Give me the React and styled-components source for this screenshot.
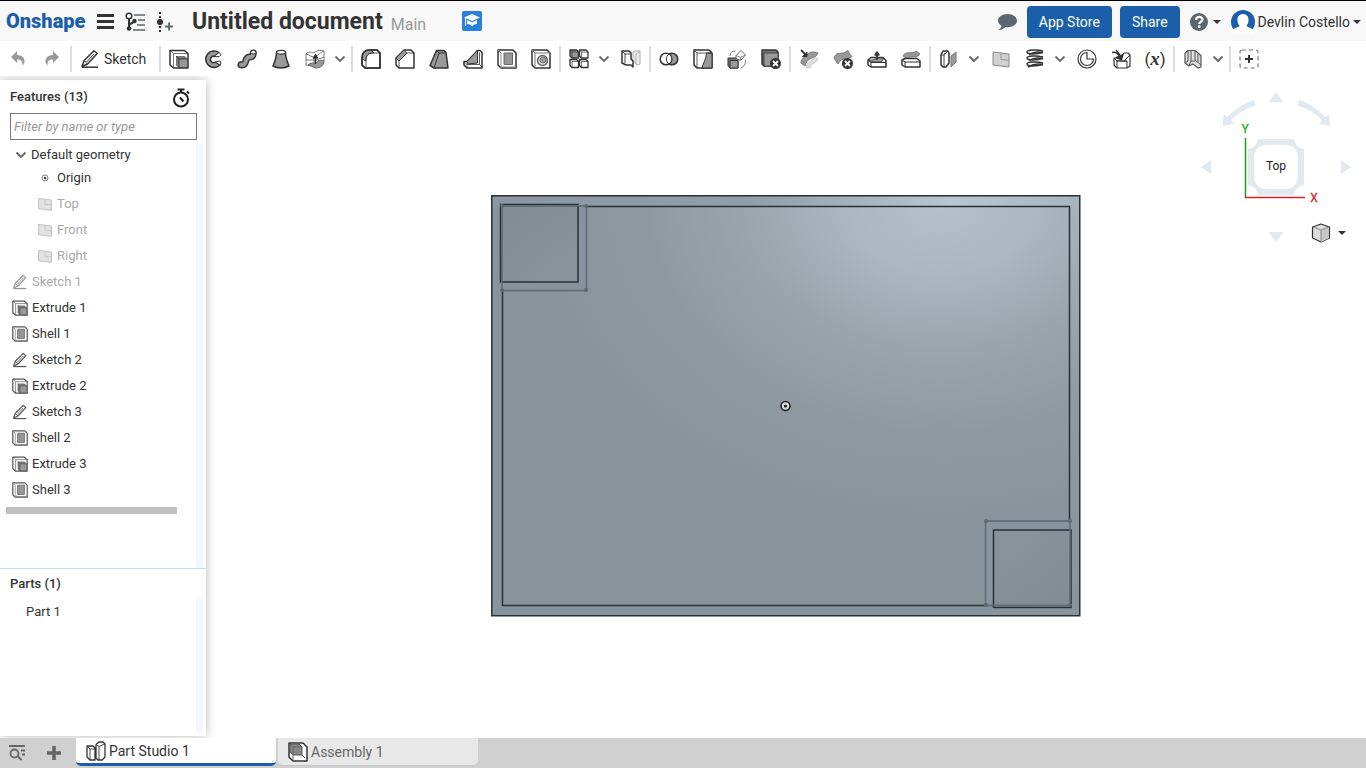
import React from "react";
import styled, { createGlobalStyle, css } from "styled-components";

const GlobalStyle = createGlobalStyle`
  *, *::before, *::after { box-sizing: border-box; }
  body {
    margin: 0;
    background: #fff;
    color: #333;
    font: 14px/20px Roboto, "Liberation Sans", sans-serif;
  }
  button, input { font: inherit; color: inherit; }
  h1, h2, ul, p { margin: 0; padding: 0; font: inherit; }
  ul { list-style: none; }
  svg { display: block; flex: none; }
`;

/* ---------- layout ---------- */

const Page = styled.div`
  display: flex;
  flex-direction: column;
  height: 100vh;
  overflow: hidden;
`;

const Header = styled.header`
  display: flex;
  align-items: center;
  height: 41px;
  padding: 2px 5px 0 6px;
  border-top: 1px solid #000;
  background: #f8f8f8;
  flex: none;
`;

const Toolbar = styled.div`
  display: flex;
  align-items: center;
  height: 39px;
  padding: 0 0 4px 1px;
  flex: none;
`;

const Workspace = styled.div`
  display: flex;
  flex: 1;
  min-height: 0;
`;

const Sidebar = styled.aside`
  position: relative;
  display: flex;
  flex-direction: column;
  width: 206px;
  margin-bottom: 2px;
  background: #fff;
  font-size: 13px;
  box-shadow: 0 0 10px rgba(0, 0, 0, 0.28);
  clip-path: inset(-4px -14px -2px 0);
  flex: none;
`;

const Viewport = styled.main`
  position: relative;
  display: flex;
  flex: 1;
  align-items: center;
  justify-content: center;
  padding-bottom: 7px;
  min-width: 0;
`;

const Footer = styled.footer`
  display: flex;
  height: 30px;
  background: #d0d0d0;
  flex: none;
`;

/* ---------- header ---------- */

const Logo = styled.a`
  width: 80px;
  margin: 0 11px 3px 0;
  color: #1b5faa;
  font-size: 20px;
  font-weight: 900;
  line-height: 24px;
  text-decoration: none;
`;

const PlainButton = styled.button`
  display: flex;
  align-items: center;
  justify-content: center;
  padding: 0;
  border: 0;
  background: none;
  cursor: pointer;
  flex: none;
`;

const MenuGroup = styled.div`
  display: flex;
  align-items: center;
  gap: 11px;
  margin-right: 16px;
`;

const DocumentTitle = styled.h1`
  font-size: 23px;
  font-weight: 700;
  line-height: 28px;
  white-space: nowrap;
`;

const Branch = styled.span`
  margin: 5px 36px 0 8px;
  color: #999;
  font-size: 16px;
`;

const EducationLink = styled.a`
  margin-bottom: 3px;
`;

const HeaderActions = styled.div`
  display: flex;
  align-items: center;
  gap: 8px;
  margin-left: auto;
`;

const CommentButton = styled(PlainButton)`
  margin-right: 2px;
`;

const BlueButton = styled.button`
  height: 32px;
  margin-bottom: 1px;
  padding: 0 12px;
  border: 0;
  border-radius: 4px;
  background: #1b5faa;
  color: #fff;
  white-space: nowrap;
`;

const HelpButton = styled(PlainButton)`
  gap: 5px;
  margin: 0 2px;
`;

const AccountButton = styled(PlainButton)`
  gap: 3px;
  white-space: nowrap;
`;

/* ---------- toolbar ---------- */

const ToolButton = styled(PlainButton)`
  width: 34px;
  height: 34px;
`;

const SketchButton = styled(PlainButton)`
  justify-content: flex-start;
  width: 85px;
  height: 34px;
  gap: 4px;
  padding-left: 7px;
`;

const MoreButton = styled(PlainButton)`
  width: 18px;
  height: 34px;
  padding-right: 2px;
`;

const Divider = styled.span`
  width: 2px;
  height: 26px;
  margin: 0 1px;
  background: #dcdcdc;
  flex: none;
`;

const VariableLabel = styled.span`
  color: #333;
  font: italic bold 19px/20px "Liberation Serif", serif;
`;

const Paren = styled.span`
  font: 17px/20px Roboto, sans-serif;
`;

/* ---------- sidebar ---------- */

const PanelHeader = styled.div`
  display: flex;
  align-items: center;
  justify-content: space-between;
  height: 33px;
  padding: 0 16px 0 10px;
`;

const PanelTitle = styled.h2`
  font-weight: 500;
`;

const TimerButton = styled(PlainButton)`
  padding-top: 3px;
`;

const FilterInput = styled.input`
  height: 27px;
  margin: 0 9px 0 10px;
  padding: 0 3px;
  border: 1px solid #777;
  border-radius: 0;
  background: #fff;
  font-style: italic;
  &::placeholder { color: #999; opacity: 1; }
`;

const ScrollPanel = styled.div`
  margin: ${(p) => p.$top}px 3px ${(p) => p.$bottom}px 0;
  border-right: 7px solid #f2f7fb;
  flex: 1;
  min-height: 0;
`;

const GroupRow = styled.button`
  display: flex;
  align-items: center;
  gap: 4px;
  width: 100%;
  height: 21px;
  padding: 1px 0 0 15px;
  border: 0;
  background: none;
  text-align: left;
`;

const FeatureRow = styled.li`
  display: flex;
  align-items: center;
  gap: 4px;
  height: 26px;
  padding-left: 12px;
  svg { stroke: #555; }
  ${(p) => p.$nested && css`
    padding-left: 37px;
  `}
  ${(p) => p.$muted && css`
    color: #aaa;
    svg { opacity: 0.6; }
  `}
`;

const RollbackBar = styled.div`
  height: 7px;
  margin: 4px 19px 0 6px;
  background: #c0c0c0;
`;

const PartsPanel = styled.section`
  display: flex;
  flex-direction: column;
  height: 168px;
  border-top: 1px solid #c9dae6;
  flex: none;
`;

const PartsTitle = styled(PanelTitle)`
  padding: 5px 10px;
`;

const PartRow = styled.li`
  height: 26px;
  padding-left: 26px;
  line-height: 26px;
`;

/* ---------- viewport ---------- */

const ViewControls = styled.div`
  position: absolute;
  top: 8px;
  right: 14px;
  display: flex;
  flex-direction: column;
  align-items: flex-end;
`;

const DisplayButton = styled(PlainButton)`
  gap: 7px;
  margin: -21px 6px 0 0;
`;

/* ---------- footer ---------- */

const FooterTools = styled.div`
  display: flex;
  align-items: center;
  gap: 21px;
  width: 76px;
  padding-left: 8px;
`;

const Tab = styled.button`
  display: flex;
  align-items: center;
  gap: 3px;
  width: 200px;
  height: 28px;
  margin-right: 2px;
  padding: 0 10px;
  border: 0;
  border-bottom: ${(p) => (p.$active ? "3px solid #1b5faa" : "1px solid #c4c4c4")};
  border-radius: 0 0 5px 5px;
  background: ${(p) => (p.$active ? "#fff" : "#e8e8e8")};
  color: ${(p) => (p.$active ? "#333" : "#666")};
`;

/* ---------- icons ---------- */

const DARK = "#333";
const MID = "#999";
const LIGHT = "#ddd";

const Icon = ({ size = 20, children, ...rest }) => (
  <svg width={size} height={size} viewBox="0 0 20 20" fill="none" stroke={DARK}
    strokeWidth="1.5" strokeLinejoin="round" aria-hidden="true" {...rest}>
    {children}
  </svg>
);

const Caret = () => (
  <svg width="8" height="4" viewBox="0 0 8 4" aria-hidden="true"><path d="M0 0h8L4 4z" fill={DARK} /></svg>
);

const Chevron = () => (
  <svg width="12" height="8" viewBox="0 0 12 8" fill="none" stroke="#666" strokeWidth="1.8" aria-hidden="true">
    <path d="M1.500 1.500 6 6l4.500-4.500" />
  </svg>
);

const Undo = ({ flip }) => (
  <svg width="14" height="16" viewBox="0 0 14 16" aria-hidden="true">
    <path transform={flip ? "translate(14 0) scale(-1 1)" : undefined}
      d="M0 6 6 0v4c5 0 8 3 7.500 7.500L11.500 15c.4-5-1.500-6.500-5.500-6.500V12z" fill={MID} />
  </svg>
);

const Pencil = ({ size }) => (
  <Icon size={size}>
    <path d="m2 17.500 2.200-6L14 1.800l3.200 2.700L7.500 15z" />
    <path d="m4.200 11.500 3.300 3.500M6.500 13l7.500-8" strokeWidth="1" />
    <path d="M2 18.200h16" />
  </Icon>
);

const Extrude = ({ size }) => (
  <Icon size={size}>
    <path d="M1 1.500h14.500l3.500 3V19H4.500L1 16z" fill="#fff" stroke="none" />
    <path d="M1.500 1.500 4.500 4.500V19M4.500 4.500H19" strokeWidth="1" stroke="#777" />
    <path d="M7 7h8.500L19 10v9h-9l-3-2.500z" fill="#777" stroke="none" />
    <path d="M10 10h9v9h-9z" fill={MID} stroke="none" />
    <path d="m7 7 3 3h9M10 10v9" strokeWidth="0.800" />
    <path d="M1 1.500h14.500l3.500 3V19H4.500L1 16z" />
  </Icon>
);

const Shell = ({ size }) => (
  <Icon size={size}>
    <path d="M1 1h15l3 3v15H4l-3-3z" fill="#fff" />
    <path d="M7 4h8.500v11.500H7z" fill={MID} stroke="#666" strokeWidth="1" />
    <path d="m7 4 2 2v8l-2 1.500M1 1l3 3v15M4 18h15" stroke="#888" strokeWidth="1" />
  </Icon>
);

const Revolve = () => (
  <Icon>
    <path d="M16 3.500A8.300 8.300 0 1 0 17 16l-4.500-3a3.200 3.200 0 1 1-.500-5.500z" fill={MID} />
    <path d="m16 3.500-4.500 3.500 4.500.800 2-2zM12 13l5-1 1 2-1 2z" fill="#fff" strokeWidth="1" />
  </Icon>
);

const Sweep = () => (
  <Icon>
    <path d="M4 15.800C11 17 6.500 8.500 12.500 8c4 0 3.500-1.500 3.800-4" stroke={DARK} strokeWidth="7" strokeLinecap="round" />
    <path d="M4 15.800C11 17 6.500 8.500 12.500 8c4 0 3.500-1.500 3.800-4" stroke={MID} strokeWidth="4.200" strokeLinecap="round" />
    <ellipse cx="16.300" cy="3.200" rx="2.600" ry="1.700" fill="#fff" strokeWidth="1" />
  </Icon>
);

const Loft = () => (
  <Icon>
    <path d="M5.500 3.500C5.500 9 3.500 13 2 17c4 2.500 12 2.500 16 0-1.500-4-3.500-8-3.500-13.500z" fill={MID} />
    <ellipse cx="10" cy="3.200" rx="4.500" ry="1.900" fill="#fff" strokeWidth="1.200" />
  </Icon>
);

const Thicken = () => (
  <Icon strokeWidth="1">
    <path d="M1 5c3-4 6 0 9-2s5-2 9-1v10l-8 6-10-2z" fill="#fff" stroke="#777" />
    <path d="M3 16c4-4 8 0 10-4 2-1 4-1 6 0 0 5-4 7-9 7-2-1-4-3-7-3z" fill={MID} stroke="#666" />
    <path d="M1 5c4 1 5 3 8 3s5-4 10-6M9 8v10M1 11h8M9 12l10-4" stroke="#777" />
    <path d="M10.500 15V7M8.500 9l2-3.500 2 3.500z" fill={DARK} strokeWidth="1.400" />
  </Icon>
);

const Fillet = () => (
  <Icon>
    <path d="M1 16V9c0-5 3-8 8-8h7l3 3v15H4z" fill="#fff" />
    <path d="M1 10c0-6 3-9 9-9l3 3c-6 0-8 2-8 8z" fill={MID} strokeWidth="0.800" />
    <path d="M5 19v-9c0-3 2-6 6-6h8" strokeWidth="0.800" />
    <path d="M1 16V9c0-5 3-8 8-8h7l3 3v15H4z" />
  </Icon>
);

const Chamfer = () => (
  <Icon>
    <path d="M1 16V9l8-8h7l3 3v15H4z" fill="#fff" />
    <path d="m1 9 8-8 3 3-8 8z" fill={MID} strokeWidth="0.800" />
    <path d="M4 19v-7l8-8h7" strokeWidth="0.800" />
  </Icon>
);

const Draft = () => (
  <Icon>
    <path d="M7.500 1.500H15l2 2L19 19H5l-4-2.500z" fill={MID} />
    <path d="m7.500 1.500 2.500 2.500L5 19M10 4h7" strokeWidth="1" />
  </Icon>
);

const Rib = () => (
  <Icon>
    <path d="M14.500 1.500H17l2 2V19H4l-3-3v-3.500h3z" fill="#fff" />
    <path d="m4 12.500 10.500-11V14L5 15z" fill={MID} strokeWidth="1" />
    <path d="M1 12.500 4 15.500h12.500V3.500M4 15.500V19M16.500 15.500 19 18" strokeWidth="0.800" />
  </Icon>
);

const Hole = () => (
  <Icon>
    <path d="M1 1h15l3 3v15H4l-3-3z" fill="#fff" />
    <path d="m1 1 3 3h15M4 4v15" strokeWidth="1" stroke="#777" />
    <circle cx="11.500" cy="11.500" r="5" fill={LIGHT} stroke="#666" />
    <circle cx="12" cy="11" r="3" fill={MID} stroke="#777" strokeWidth="1" />
  </Icon>
);

const Pattern = () => (
  <Icon strokeWidth="1.300">
    {[[1, 1], [10.5, 1], [1, 10.5], [10.5, 10.5]].map(([x, y], i) => (
      <g key={i}>
        <path d={`M${x} ${y}h6.500l2 2v6h-6.500l-2-2z`} fill={i === 0 ? MID : "#fff"} />
        <path d={`M${x} ${y}l2 2h6.500M${x + 2} ${y + 2}v6`} strokeWidth="0.700" />
      </g>
    ))}
  </Icon>
);

const Mirror = () => (
  <Icon>
    <path d="m12 3 2-1h5v13l-3 1-4-5z" fill="#eee" stroke="#aaa" strokeWidth="1" />
    <path d="M15 5v10M15 5l4-3" stroke="#aaa" strokeWidth="1" />
    <path d="M1 2h7l2 2v6l2 2v6l-2-2H5l-4-2z" fill="#fff" />
    <path d="m1 2 3 3v9M4 5h5" strokeWidth="0.900" />
  </Icon>
);

const BooleanIcon = () => (
  <Icon>
    <circle cx="13" cy="10" r="5.800" fill={MID} />
    <circle cx="7" cy="10" r="5.800" fill="#fff" />
    <path d="M10 5a6 6 0 0 1 0 10 6 6 0 0 1 0-10z" fill="#fff" strokeWidth="1" />
  </Icon>
);

const Split = () => (
  <Icon>
    <path d="M1 1h15l3 3v15H4l-3-3z" fill="#fff" />
    <path d="M13.500 4H19v15H9c1-5 4-8 4.500-15z" fill={MID} strokeWidth="1" />
    <path d="m1 1 3 3h15M4 4v15" strokeWidth="0.800" />
  </Icon>
);

const Transform = () => (
  <Icon strokeWidth="1">
    <path d="M1 9h8l2 2v8H3l-2-2z" fill="#777" />
    <path d="M3 11.500h8V19H3z" fill={MID} />
    <path d="m9 6.500 5-5 4.500 4.500-5 5.500-4.500-2z" fill="#fff" stroke="#666" />
    <path d="m9 6.500 4.500 1.800 5-2.300M13.500 8.300v3" stroke="#888" />
    <path d="M3 7c0-3 2-5 5-5M18.500 11c.500 4-1.500 6.500-5 8" stroke="#777" />
  </Icon>
);

const DeleteBadge = () => (
  <>
    <circle cx="14.500" cy="14.500" r="5.500" fill={DARK} stroke="none" />
    <path d="m12 12 5 5m0-5-5 5" stroke="#fff" strokeWidth="1.800" />
  </>
);

const DeletePart = () => (
  <Icon>
    <path d="M1 1h14l2 2v14H3l-2-2z" fill="#777" />
    <path d="M3 4h14v13H3z" fill={MID} strokeWidth="0.800" />
    <DeleteBadge />
  </Icon>
);

const MoveFace = () => (
  <Icon strokeWidth="1">
    <path d="M2 14c0-6 5-5 7-9 3-3 6-2 10-1-2 5-5 4-8 6-3 1-4 4-5 7z" fill={MID} stroke="#777" />
    <path d="M7 18.500c1-6 5-5 8-10l4 1c-1 5-7 4-8 9.500z" fill={LIGHT} stroke="#ccc" />
    <path d="m2 1 4.500 4.500" strokeWidth="1.800" />
    <path d="M8 3v4.500H3.500z" fill={DARK} />
  </Icon>
);

const DeleteFace = () => (
  <Icon strokeWidth="1">
    <path d="M1 9c3-8 8-2 14-7.500 1 3 3 5 4 6C14 12 9 7 5 15z" fill={MID} stroke="#777" />
    <DeleteBadge />
  </Icon>
);

const ReplaceFace = () => (
  <Icon>
    <path d="m1 11 3-2.500h12l3 3V18H4l-3-2z" fill="#fff" />
    <path d="M2 11c5 1 9-4 15-1.500L14 13H4z" fill={MID} strokeWidth="0.800" />
    <path d="m1 11 3 2.500h15M4 13.500V18" strokeWidth="1" />
    <path d="M10 11V4M8 6l2-3 2 3z" fill={DARK} />
  </Icon>
);

const OffsetSurface = () => (
  <Icon>
    <path d="M2 7c3-6 9-1 13-5l4 3c-3 5-9 1-13 4.500z" fill={MID} stroke="#777" strokeWidth="1" />
    <path d="m1 11 3-1.500h12l3 2.500v6H4l-3-2z" fill="#fff" />
    <path d="m1 11 3 2h15M4 13v5" strokeWidth="1" />
  </Icon>
);

const PlaneOffset = () => (
  <Icon>
    <path d="m2 6 2-4h5l1 2v10l-3 4H4l-2-2z" fill="#fff" />
    <path d="M2 6h3v12M5 6l4-4M5 6l1-2" strokeWidth="0.900" />
    <path d="m12 7 5-4v10l-5 5z" fill={MID} stroke="#777" strokeWidth="1" />
  </Icon>
);

const Plane = ({ size }) => (
  <Icon size={size} strokeWidth="1">
    <path d="m2 3 16 2v13L2 16z" fill="#d0d0d0" stroke="#888" />
    <path d="M10 4v6.500l8 .800" stroke="#999" />
  </Icon>
);

const Helix = () => (
  <Icon strokeWidth="1.500">
    {[3, 9, 15].map((y) => (
      <path key={y} d={`M18 ${y - 1}C11 ${y - 3} 2 ${y - 2} 2 ${y}c0 2.500 9 2.500 16 .500`} />
    ))}
    <path d="M18 3.500c-5-1-11 0-14 2M18 9.500c-5-1-11 0-14 2M18 15.500c-5-1-11 0-15 2.500" />
  </Icon>
);

const Measure = () => (
  <Icon strokeWidth="1.200">
    <circle cx="10" cy="10" r="9" />
    <path d="M10 3.500a6.500 6.500 0 1 0 6.500 6.500H10z" />
  </Icon>
);

const ImportPart = () => (
  <Icon strokeWidth="1.200">
    <path d="M3 9h6l4-5h4l2 2v11l-3 2H6l-3-3z" fill="#fff" />
    <path d="m3 9 3 3h7l6-6M6 12v7M13 12h3v7M6 12l10 0" strokeWidth="1" />
    <path d="M1 3.500c4-1 6 1 7.500 4M5 1l4 5" strokeWidth="1.300" />
    <path d="M12 5.500 10.500 11 5 8.500z" fill={DARK} />
  </Icon>
);

const SheetMetal = () => (
  <Icon strokeWidth="1.200">
    <path d="m2 4 3-2.500h7l6 5V18l-3 1-5-4-4 2-4-3z" fill={LIGHT} stroke="#555" />
    <path d="M5 1.500V12l-3 2M8 2v10l-2 5M12 1.500V11l6 5M8 12h4M15 5v8" stroke="#555" strokeWidth="1" />
  </Icon>
);

const AddTool = () => (
  <Icon>
    <rect x="1" y="1" width="18" height="18" rx="2" stroke="#777" strokeWidth="1.200" strokeDasharray="4 3" />
    <path d="M10 6v8M6 10h8" strokeWidth="2" />
  </Icon>
);

const OriginIcon = () => (
  <Icon size={16} strokeWidth="1.200">
    <circle cx="10" cy="10" r="3.800" stroke="#777" />
    <circle cx="10" cy="10" r="1.500" fill={DARK} stroke="none" />
  </Icon>
);

const Hamburger = () => (
  <svg width="17" height="16" viewBox="0 0 17 16" fill={DARK} aria-hidden="true">
    <path d="M0 0h17v3H0zM0 6h17v3H0zM0 12h17v3H0z" />
  </svg>
);

const Versions = () => (
  <Icon>
    <circle cx="4" cy="4" r="2.800" />
    <path d="M4 7v9M4 14c0-4 5-1 5-6" strokeWidth="2" />
    <circle cx="4" cy="16.500" r="2.300" fill={DARK} stroke="none" />
    <circle cx="9.500" cy="9" r="2.200" fill={DARK} stroke="none" />
    <path d="M9 3h11M13 8h7M12 13h8M8 18h12" stroke="#5b6770" strokeWidth="1.600" />
  </Icon>
);

const AddVersion = () => (
  <Icon>
    <path d="M4 0v2M4 4v2M4 14v2M4 18v2" strokeWidth="2" />
    <circle cx="4" cy="10" r="3" fill={DARK} stroke="none" />
    <path d="M13 10.500v8M9 14.500h8" stroke="#5b6770" strokeWidth="1.800" />
  </Icon>
);

const Education = () => (
  <svg width="20" height="20" viewBox="0 0 20 20" aria-hidden="true">
    <rect width="20" height="20" rx="2" fill="#2680dc" />
    <path d="m10 3 8 3.500-8 3.500-8-3.500zM5 9l5 2.300L15 9v4c-2 0-4 .800-5 2.500C9 13.800 7 13 5 13zM3 7v8h1V8z" fill="#fff" />
  </svg>
);

const Comment = () => (
  <svg width="20" height="18" viewBox="0 0 20 18" aria-hidden="true">
    <path d="M10.500 1C5 1 1 4 1 7.500c0 2.300 1.300 4 3.500 5.300 0 1.700-1.500 3-3 4.200 3 0 5.300-1.300 6.800-3 6.500.800 11.700-2 11.700-6.500C20 4 16 1 10.500 1z" fill="#5b6770" />
  </svg>
);

const Help = () => (
  <svg width="18" height="18" viewBox="0 0 18 18" aria-hidden="true">
    <circle cx="9" cy="9" r="9" fill="#5b6770" />
    <path d="M6 7c0-4 6.500-4 6.500-.500 0 2.500-3.300 2.300-3.300 4.500" fill="none" stroke="#fff" strokeWidth="2.200" />
    <circle cx="9.200" cy="13.700" r="1.400" fill="#fff" />
  </svg>
);

const Avatar = () => (
  <svg width="24" height="24" viewBox="0 0 24 24" aria-hidden="true">
    <circle cx="12" cy="12" r="12" fill="#1b5faa" />
    <path d="M12 4c-4 0-6 3-5.500 7 .300 2 1 3.500 2 4.500-.500 2-6 2-7 5V24h21v-3.500c-1-3-6.500-3-7-5 1-1 1.700-2.500 2-4.500C18 7 16 4 12 4z" fill="#fff" />
  </svg>
);

const Stopwatch = () => (
  <svg width="18" height="20" viewBox="0 0 18 20" fill="none" stroke="#222" strokeWidth="2" aria-hidden="true">
    <circle cx="9" cy="11.500" r="7" />
    <path d="M5.500 1.500h7M9 1.500V4M15 3.500l2 2M8 9.500l3.500 4" />
  </svg>
);

const TabSearch = () => (
  <svg width="18" height="16" viewBox="0 0 18 16" fill="none" stroke="#666" strokeWidth="1.800" aria-hidden="true">
    <path d="M1 1h16M13 5.500h4M14 9.500h3M9.500 11l4 4" /><circle cx="6.500" cy="8.500" r="4" />
  </svg>
);

const Plus = () => (
  <svg width="14" height="14" viewBox="0 0 14 14" stroke="#666" strokeWidth="3.600" aria-hidden="true">
    <path d="M7 0v14M0 7h14" />
  </svg>
);

const PartStudioIcon = () => (
  <Icon strokeWidth="1.300">
    <path d="M1 5h6l2 2v12H4l-3-3zM10 3.500 13 1h4l2 2v13l-3 3h-4l-2-2z" fill="#fff" />
    <path d="m1 5 3 3h5M4 8v11M10 3.500l3 2 6-2.500M13 5.500V19" strokeWidth="0.900" />
  </Icon>
);

const AssemblyIcon = () => (
  <Icon>
    <path d="M1 1h14l4 4v14H5l-4-4z" fill="#fff" />
    <path d="M2 2h9l3 3v8H5l-3-3z" fill="#888" stroke="#555" strokeWidth="1" />
    <path d="m14 13 3 3M2 2l3 3h9M5 5v14" stroke="#666" strokeWidth="1" />
  </Icon>
);

/* ---------- drawings ---------- */

const PartDrawing = () => (
  <svg width="590" height="422" viewBox="0 0 590 422" fill="none" role="img" aria-label="Part 1, top view">
    <defs>
      <radialGradient id="sheen" gradientUnits="userSpaceOnUse" cx="450" cy="0" r="400" gradientTransform="scale(1 .8)">
        <stop offset="0" stopColor="#b6c1cb" />
        <stop offset="0.250" stopColor="#abb6c0" />
        <stop offset="0.500" stopColor="#99a4ad" />
        <stop offset="0.750" stopColor="#8f99a2" />
        <stop offset="1" stopColor="#8a949d" />
      </radialGradient>
      <linearGradient id="rim" x1="0" x2="1" y1="0" y2="0">
        <stop offset="0" stopColor="#8a97a2" />
        <stop offset="0.450" stopColor="#929fa9" />
        <stop offset="0.780" stopColor="#b9c5cf" />
        <stop offset="1" stopColor="#a8b5c0" />
      </linearGradient>
      <linearGradient id="side" x1="0" x2="0" y1="0" y2="1">
        <stop offset="0" stopColor="#a8b5c0" />
        <stop offset="0.500" stopColor="#8e9aa4" />
        <stop offset="1" stopColor="#87939d" />
      </linearGradient>
      <radialGradient id="pocket" r="0.750">
        <stop offset="0" stopColor="#8b949d" />
        <stop offset="0.700" stopColor="#88929b" />
        <stop offset="1" stopColor="#7f8b94" />
      </radialGradient>
    </defs>
    <path d="M1 1h588v420H1z" fill="#87939d" />
    <path d="M1 1h588v11H1z" fill="url(#rim)" />
    <path d="M579 1h10v420h-10z" fill="url(#side)" />
    <path d="M11 11h568v399H11z" fill="url(#sheen)" />
    <path d="M10 10h86v86H10zM494 326h86v86h-86z" fill="#87939d" />
    <path d="M10 10h77v77H10zM503 335h77v77h-77z" fill="url(#pocket)" />
    <path d="M96 11.500h482.500V326M11.500 96v314.500H494" stroke="#2b3035" strokeWidth="1.500" />
    <path d="M9.500 9.500H87V87H9.500zM502.500 335H580v77.500h-77.500z" stroke="#2b3035" strokeWidth="1.500" />
    <path d="M11 11h84.500v84.500H11zM494.500 326H579v84.500h-84.500z" stroke="#5e6a73" strokeWidth="1.800" opacity=".85" />
    {[[11, 11], [95, 11], [11, 95], [95, 95], [495, 326], [579, 326], [495, 410], [579, 410]].map(([x, y]) => (
      <circle key={`${x}-${y}`} cx={x} cy={y} r="2" fill="#5e6a73" />
    ))}
    <rect x="0.750" y="0.750" width="588" height="420" stroke="#2b3035" strokeWidth="1.500" />
    <circle cx="294.500" cy="211" r="4.500" fill="#d5dadd" stroke="#222" strokeWidth="1.600" />
    <circle cx="294.500" cy="211" r="1.600" fill="#222" />
  </svg>
);

const AxisText = styled.text`
  font: 400 12px Roboto, sans-serif;
  text-anchor: middle;
`;

const ViewCube = () => (
  <svg width="156" height="156" viewBox="0 0 156 156" role="img" aria-label="View cube">
    <g fill="#e2e9ef">
      <path d="M80 4l7.500 10h-15zM80 154l7.500-10h-15zM5 79l10-7v14zM155 79l-10-7v14z" />
      <path d="m58 12 1.500 5.500C50 20.500 42 25 35 32l3 4-11.500 2L28 26l3.500 3C40 20.500 48 15 58 12zM103 12l-1.500 5.500c9.500 3 17.500 7.500 24.500 14.500l-3 4 11.500 2L133 26l-3.500 3C121 20.500 113 15 103 12z" />
      <path d="M62 51h36c1 6 4 9 10 10v36c-6 1-9 4-10 10H62c-1-6-4-9-10-10V61c6-1 9-4 10-10z" />
    </g>
    <rect x="58" y="57" width="44" height="44" rx="12" fill="#fff" />
    <path d="M49.500 50v60" stroke="#1a9f1a" strokeWidth="1.500" />
    <path d="M49 109.500h60" stroke="#dc2020" strokeWidth="1.500" />
    <AxisText x="49" y="45" fill="#14b314" stroke="#14b314" strokeWidth="0.300">Y</AxisText>
    <AxisText x="118" y="114" fill="#dc2020" stroke="#dc2020" strokeWidth="0.300">X</AxisText>
    <AxisText x="80" y="82" fill="#222">Top</AxisText>
  </svg>
);

const ShadedCube = () => (
  <Icon>
    <path d="m10 1 8.500 3v11L10 19l-8.500-4V4z" fill="#ddd" strokeWidth="1.200" />
    <path d="m10 7 8-3v11l-8 4z" fill="#c8c8c8" stroke="none" />
    <path d="m2 4 8 3 8-3M10 7v11.500" stroke="#888" strokeWidth="1" />
  </Icon>
);

/* ---------- data ---------- */

const Variable = () => <VariableLabel><Paren>(</Paren>x<Paren>)</Paren></VariableLabel>;

const toolGroups = [
  [["Extrude", Extrude], ["Revolve", Revolve], ["Sweep", Sweep], ["Loft", Loft], ["Thicken", Thicken, true]],
  [["Fillet", Fillet], ["Chamfer", Chamfer], ["Draft", Draft], ["Rib", Rib], ["Shell", Shell], ["Hole", Hole]],
  [["Linear pattern", Pattern, true], ["Mirror", Mirror]],
  [["Boolean", BooleanIcon], ["Split", Split], ["Transform", Transform], ["Delete part", DeletePart]],
  [["Move face", MoveFace], ["Delete face", DeleteFace], ["Replace face", ReplaceFace], ["Offset surface", OffsetSurface]],
  [
    ["Surface", PlaneOffset, true], ["Plane", Plane], ["Helix", Helix, true], ["Mate connector", Measure],
    ["Derived", ImportPart], ["Variable", Variable],
  ],
  [["Sheet metal", SheetMetal, true]],
];

const featureIcons = { Sketch: Pencil, Extrude, Shell };
const features = [
  ["Sketch", 1, true], ["Extrude", 1], ["Shell", 1], ["Sketch", 2], ["Extrude", 2],
  ["Sketch", 3], ["Shell", 2], ["Extrude", 3], ["Shell", 3],
];

export default function App() {
  return (
    <Page>
      <GlobalStyle />
      <Header>
        <Logo href="#">Onshape</Logo>
        <MenuGroup>
          <PlainButton aria-label="Menu"><Hamburger /></PlainButton>
          <PlainButton aria-label="Versions and history"><Versions /></PlainButton>
          <PlainButton aria-label="Create version"><AddVersion /></PlainButton>
        </MenuGroup>
        <DocumentTitle>Untitled document</DocumentTitle>
        <Branch>Main</Branch>
        <EducationLink href="#" aria-label="Education"><Education /></EducationLink>
        <HeaderActions>
          <CommentButton aria-label="Comments"><Comment /></CommentButton>
          <BlueButton>App Store</BlueButton>
          <BlueButton>Share</BlueButton>
          <HelpButton aria-label="Help"><Help /><Caret /></HelpButton>
          <AccountButton><Avatar />Devlin Costello<Caret /></AccountButton>
        </HeaderActions>
      </Header>

      <Toolbar role="toolbar">
        <ToolButton aria-label="Undo"><Undo /></ToolButton>
        <ToolButton aria-label="Redo"><Undo flip /></ToolButton>
        <Divider />
        <SketchButton><Pencil size={20} />Sketch</SketchButton>
        {toolGroups.map((group, i) => (
          <React.Fragment key={i}>
            <Divider />
            {group.map(([name, Glyph, more]) => (
              <React.Fragment key={name}>
                <ToolButton aria-label={name}><Glyph /></ToolButton>
                {more && <MoreButton aria-label={`More ${name} tools`}><Chevron /></MoreButton>}
              </React.Fragment>
            ))}
          </React.Fragment>
        ))}
        <Divider />
        <ToolButton aria-label="Add custom features"><AddTool /></ToolButton>
      </Toolbar>

      <Workspace>
        <Sidebar>
          <PanelHeader>
            <PanelTitle>Features (13)</PanelTitle>
            <TimerButton aria-label="Regeneration times"><Stopwatch /></TimerButton>
          </PanelHeader>
          <FilterInput type="text" aria-label="Filter features" placeholder="Filter by name or type" />
          <ScrollPanel $top={4} $bottom={0}>
            <GroupRow aria-expanded="true"><Chevron />Default geometry</GroupRow>
            <ul>
              <FeatureRow $nested><OriginIcon />Origin</FeatureRow>
              {["Top", "Front", "Right"].map((name) => (
                <FeatureRow key={name} $nested $muted><Plane size={16} />{name}</FeatureRow>
              ))}
              {features.map(([kind, number, muted]) => {
                const Glyph = featureIcons[kind];
                return (
                  <FeatureRow key={kind + number} $muted={muted}>
                    <Glyph size={16} />{kind} {number}
                  </FeatureRow>
                );
              })}
            </ul>
            <RollbackBar />
          </ScrollPanel>
          <PartsPanel>
            <PartsTitle>Parts (1)</PartsTitle>
            <ScrollPanel $top={0} $bottom={4}>
              <ul><PartRow>Part 1</PartRow></ul>
            </ScrollPanel>
          </PartsPanel>
        </Sidebar>
        <Viewport>
          <PartDrawing />
          <ViewControls>
            <ViewCube />
            <DisplayButton aria-label="Display style"><ShadedCube /><Caret /></DisplayButton>
          </ViewControls>
        </Viewport>
      </Workspace>

      <Footer>
        <FooterTools>
          <PlainButton aria-label="Tab manager"><TabSearch /></PlainButton>
          <PlainButton aria-label="Add tab"><Plus /></PlainButton>
        </FooterTools>
        <Tab $active><PartStudioIcon />Part Studio 1</Tab>
        <Tab><AssemblyIcon />Assembly 1</Tab>
      </Footer>
    </Page>
  );
}
